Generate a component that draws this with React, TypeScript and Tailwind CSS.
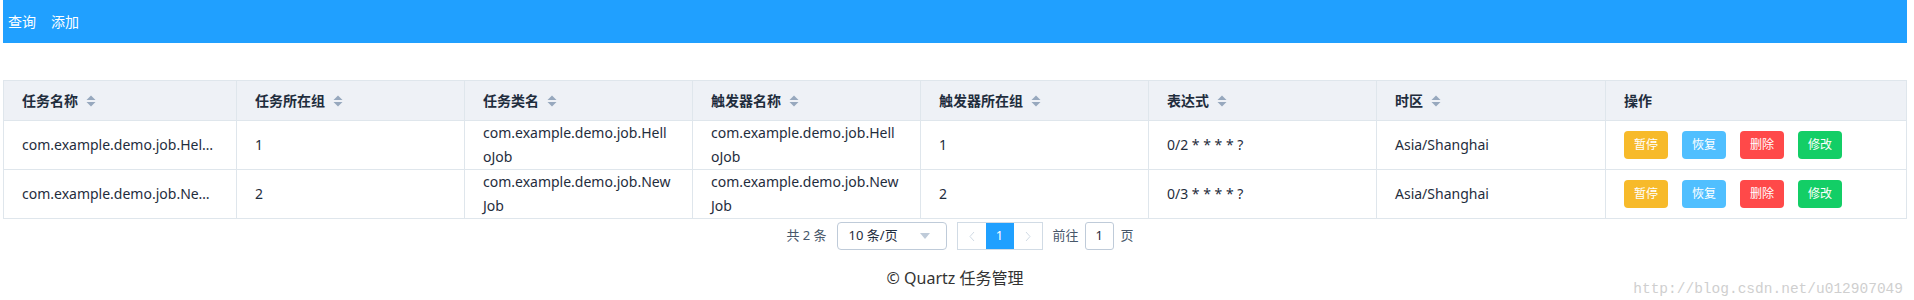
type Job = {
  name: string;
  group: string;
  className: string;
  trigger: string;
  triggerGroup: string;
  cron: string;
  zone: string;
};

const jobs: Job[] = [
  {
    name: 'com.example.demo.job.HelloJob',
    group: '1',
    className: 'com.example.demo.job.HelloJob',
    trigger: 'com.example.demo.job.HelloJob',
    triggerGroup: '1',
    cron: '0/2 * * * * ?',
    zone: 'Asia/Shanghai',
  },
  {
    name: 'com.example.demo.job.NewJob',
    group: '2',
    className: 'com.example.demo.job.NewJob',
    trigger: 'com.example.demo.job.NewJob',
    triggerGroup: '2',
    cron: '0/3 * * * * ?',
    zone: 'Asia/Shanghai',
  },
];

const headers = ['任务名称', '任务所在组', '任务类名', '触发器名称', '触发器所在组', '表达式', '时区'];
const widths = [233, 228, 228, 228, 228, 228, 229];

function SortIcon() {
  return (
    <svg width="10" height="12" viewBox="0 0 10 12" className="ml-[8px] inline-block">
      <polygon points="0.5,5 5,0.5 9.5,5" fill="#97a8be" />
      <polygon points="0.5,7 5,11.5 9.5,7" fill="#97a8be" />
    </svg>
  );
}

function ActionButton({ label, color }: { label: string; color: string }) {
  return (
    <button className={`h-[28px] w-[44px] rounded-[4px] text-[12px] text-white ${color}`}>{label}</button>
  );
}

export default function App() {
  const font = { fontFamily: '"Noto Sans", "Noto Sans CJK SC", sans-serif' };
  return (
    <div className="relative h-[300px] w-[1914px] overflow-hidden bg-white" style={font}>
      {/* top menu */}
      <div className="ml-[3px] flex h-[43px] w-[1904px] items-center gap-[15px] bg-[#20a0ff] pl-[5px] text-[14px] text-white">
        <span>查询</span>
        <span>添加</span>
      </div>

      <div className="ml-[3px] mt-[37px] w-[1904px]">
        <table className="w-[1904px] table-fixed border-collapse border border-[#dfe6ec] text-[14px] text-[#1f2d3d]">
          <colgroup>
            {widths.map((w, i) => (
              <col key={i} style={{ width: w }} />
            ))}
            <col />
          </colgroup>
          <thead className="bg-[#eef1f6]">
            <tr>
              {headers.map((h) => (
                <th key={h} className="h-[40px] border border-[#dfe6ec] px-[18px] text-left font-bold">
                  <span className="inline-flex items-center">
                    {h}
                    <SortIcon />
                  </span>
                </th>
              ))}
              <th className="h-[40px] border border-[#dfe6ec] px-[18px] text-left font-bold">操作</th>
            </tr>
          </thead>
          <tbody>
            {jobs.map((job) => (
              <tr key={job.name}>
                <td className="h-[48px] border border-[#dfe6ec] pl-[18px] pr-[22px]">
                  <div className="truncate leading-[24px]">{job.name}</div>
                </td>
                <td className="h-[48px] border border-[#dfe6ec] px-[18px] leading-[24px]">{job.group}</td>
                <td className="h-[48px] border border-[#dfe6ec] pl-[18px] pr-[20px] leading-[24px] break-all">{job.className}</td>
                <td className="h-[48px] border border-[#dfe6ec] pl-[18px] pr-[20px] leading-[24px] break-all">{job.trigger}</td>
                <td className="h-[48px] border border-[#dfe6ec] px-[18px] leading-[24px]">{job.triggerGroup}</td>
                <td className="h-[48px] border border-[#dfe6ec] px-[18px] leading-[24px]">{job.cron}</td>
                <td className="h-[48px] border border-[#dfe6ec] px-[18px] leading-[24px]">{job.zone}</td>
                <td className="h-[48px] border border-[#dfe6ec] px-[18px]">
                  <div className="flex gap-[14px]">
                    <ActionButton label="暂停" color="bg-[#f7ba2a]" />
                    <ActionButton label="恢复" color="bg-[#50bfff]" />
                    <ActionButton label="删除" color="bg-[#ff4949]" />
                    <ActionButton label="修改" color="bg-[#13ce66]" />
                  </div>
                </td>
              </tr>
            ))}
          </tbody>
        </table>

        {/* pagination */}
        <div className="mt-[3px] flex items-center justify-center pl-[10px] text-[13px] text-[#48576a]">
          <span>共 2 条</span>
          <div className="ml-[10px] flex h-[28px] w-[110px] items-center justify-between rounded-[4px] border border-[#bfcbd9] pl-[11px] pr-[16px] text-[#1f2d3d]">
            <span>10 条/页</span>
            <svg width="10" height="6" viewBox="0 0 10 6">
              <polygon points="0,0 10,0 5,6" fill="#bfcbd9" />
            </svg>
          </div>
          <div className="ml-[10px] flex h-[28px] border border-[#d1dbe5]">
            <div className="flex w-[28px] items-center justify-center">
              <svg width="6" height="11" viewBox="0 0 6 11">
                <polyline points="5,1 1,5.5 5,10" fill="none" stroke="#d1dbe5" strokeWidth="1" />
              </svg>
            </div>
            <div className="flex w-[28px] items-center justify-center bg-[#20a0ff] text-white">1</div>
            <div className="flex w-[28px] items-center justify-center">
              <svg width="6" height="11" viewBox="0 0 6 11">
                <polyline points="1,1 5,5.5 1,10" fill="none" stroke="#d1dbe5" strokeWidth="1" />
              </svg>
            </div>
          </div>
          <span className="ml-[10px]">前往</span>
          <div className="ml-[6px] flex h-[28px] w-[29px] items-center justify-center rounded-[3px] border border-[#bfcbd9] text-[#1f2d3d]">
            1
          </div>
          <span className="ml-[7px]">页</span>
        </div>

        <div className="mt-[16px] text-center text-[16px] text-[#333]">© Quartz 任务管理</div>
      </div>

      {/* image watermark */}
      <div
        className="absolute right-[11px] top-[279px] text-[14.5px] text-[#cfcfcf]"
        style={{ fontFamily: '"Liberation Mono", monospace' }}
      >
        http://blog.csdn.net/u012907049
      </div>
    </div>
  );
}
